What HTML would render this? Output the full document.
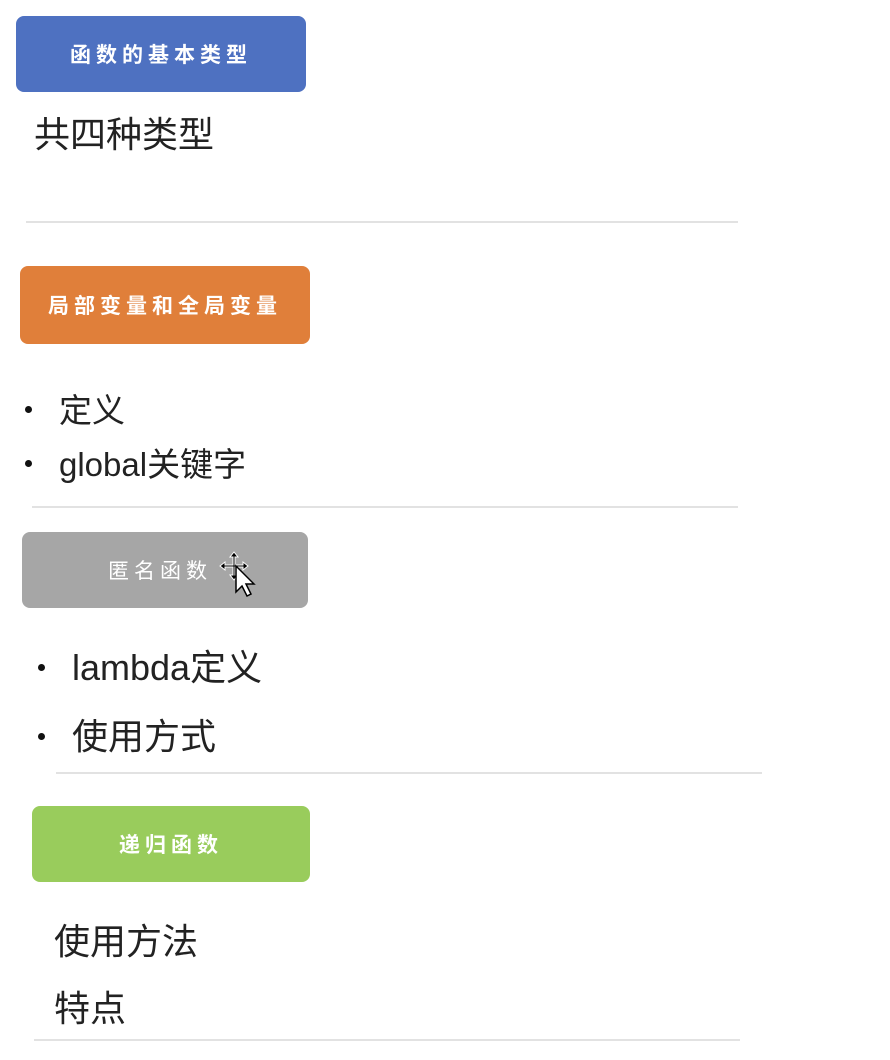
<!DOCTYPE html>
<html><head><meta charset="utf-8"><style>
body{margin:0;width:890px;height:1060px;background:#fff;position:relative;overflow:hidden;font-family:"Liberation Sans","Noto Sans CJK SC",sans-serif;color:#222}
.b{position:absolute;border-radius:8px;color:#fff;font-weight:bold;font-size:21px;letter-spacing:5px;display:flex;align-items:center;justify-content:center}
.t{position:absolute;font-size:36px;line-height:1;white-space:nowrap}
.l{position:absolute;height:2px;background:#e2e2e2}
.d{position:absolute;width:7px;height:7px;border-radius:50%;background:#111}
</style></head><body>
<div class="b" style="left:16px;top:16px;width:290px;height:76px;background:#4e71c1">函数的基本类型</div>
<div class="t" style="left:34px;top:117px">共四种类型</div>
<div class="l" style="left:26px;top:221px;width:712px"></div>

<div class="b" style="left:20px;top:266px;width:290px;height:78px;background:#e07f3a">局部变量和全局变量</div>
<div class="d" style="left:25px;top:406px"></div>
<div class="t" style="left:59px;top:394px;font-size:33px">定义</div>
<div class="d" style="left:25px;top:460px"></div>
<div class="t" style="left:59px;top:448px;font-size:33px">global关键字</div>
<div class="l" style="left:32px;top:506px;width:706px"></div>

<div class="b" style="left:22px;top:532px;width:286px;height:76px;background:#a6a6a6;font-weight:normal"><span style="margin-left:-10px">匿名函数</span></div>
<svg style="position:absolute;left:216px;top:550px" width="40" height="60" viewBox="0 0 40 60"><path d="M18 2l-4 5h3v8h-8v-3l-5 4 5 4v-3h8v8h-3l4 5 4-5h-3v-8h8v3l5-4-5-4v3h-8V7h3z" fill="#000" stroke="#fff" stroke-width="1"/><path d="M20 16v26l6-6 5 10 4-2-5-10h8z" fill="#fff" stroke="#000" stroke-width="1.5"/></svg>
<div class="d" style="left:38px;top:664px"></div>
<div class="t" style="left:72px;top:650px">lambda定义</div>
<div class="d" style="left:38px;top:733px"></div>
<div class="t" style="left:72px;top:719px">使用方式</div>
<div class="l" style="left:56px;top:772px;width:706px"></div>

<div class="b" style="left:32px;top:806px;width:278px;height:76px;background:#99cc5c">递归函数</div>
<div class="t" style="left:54px;top:924px">使用方法</div>
<div class="t" style="left:54px;top:991px">特点</div>
<div class="l" style="left:34px;top:1039px;width:706px"></div>
</body></html>
